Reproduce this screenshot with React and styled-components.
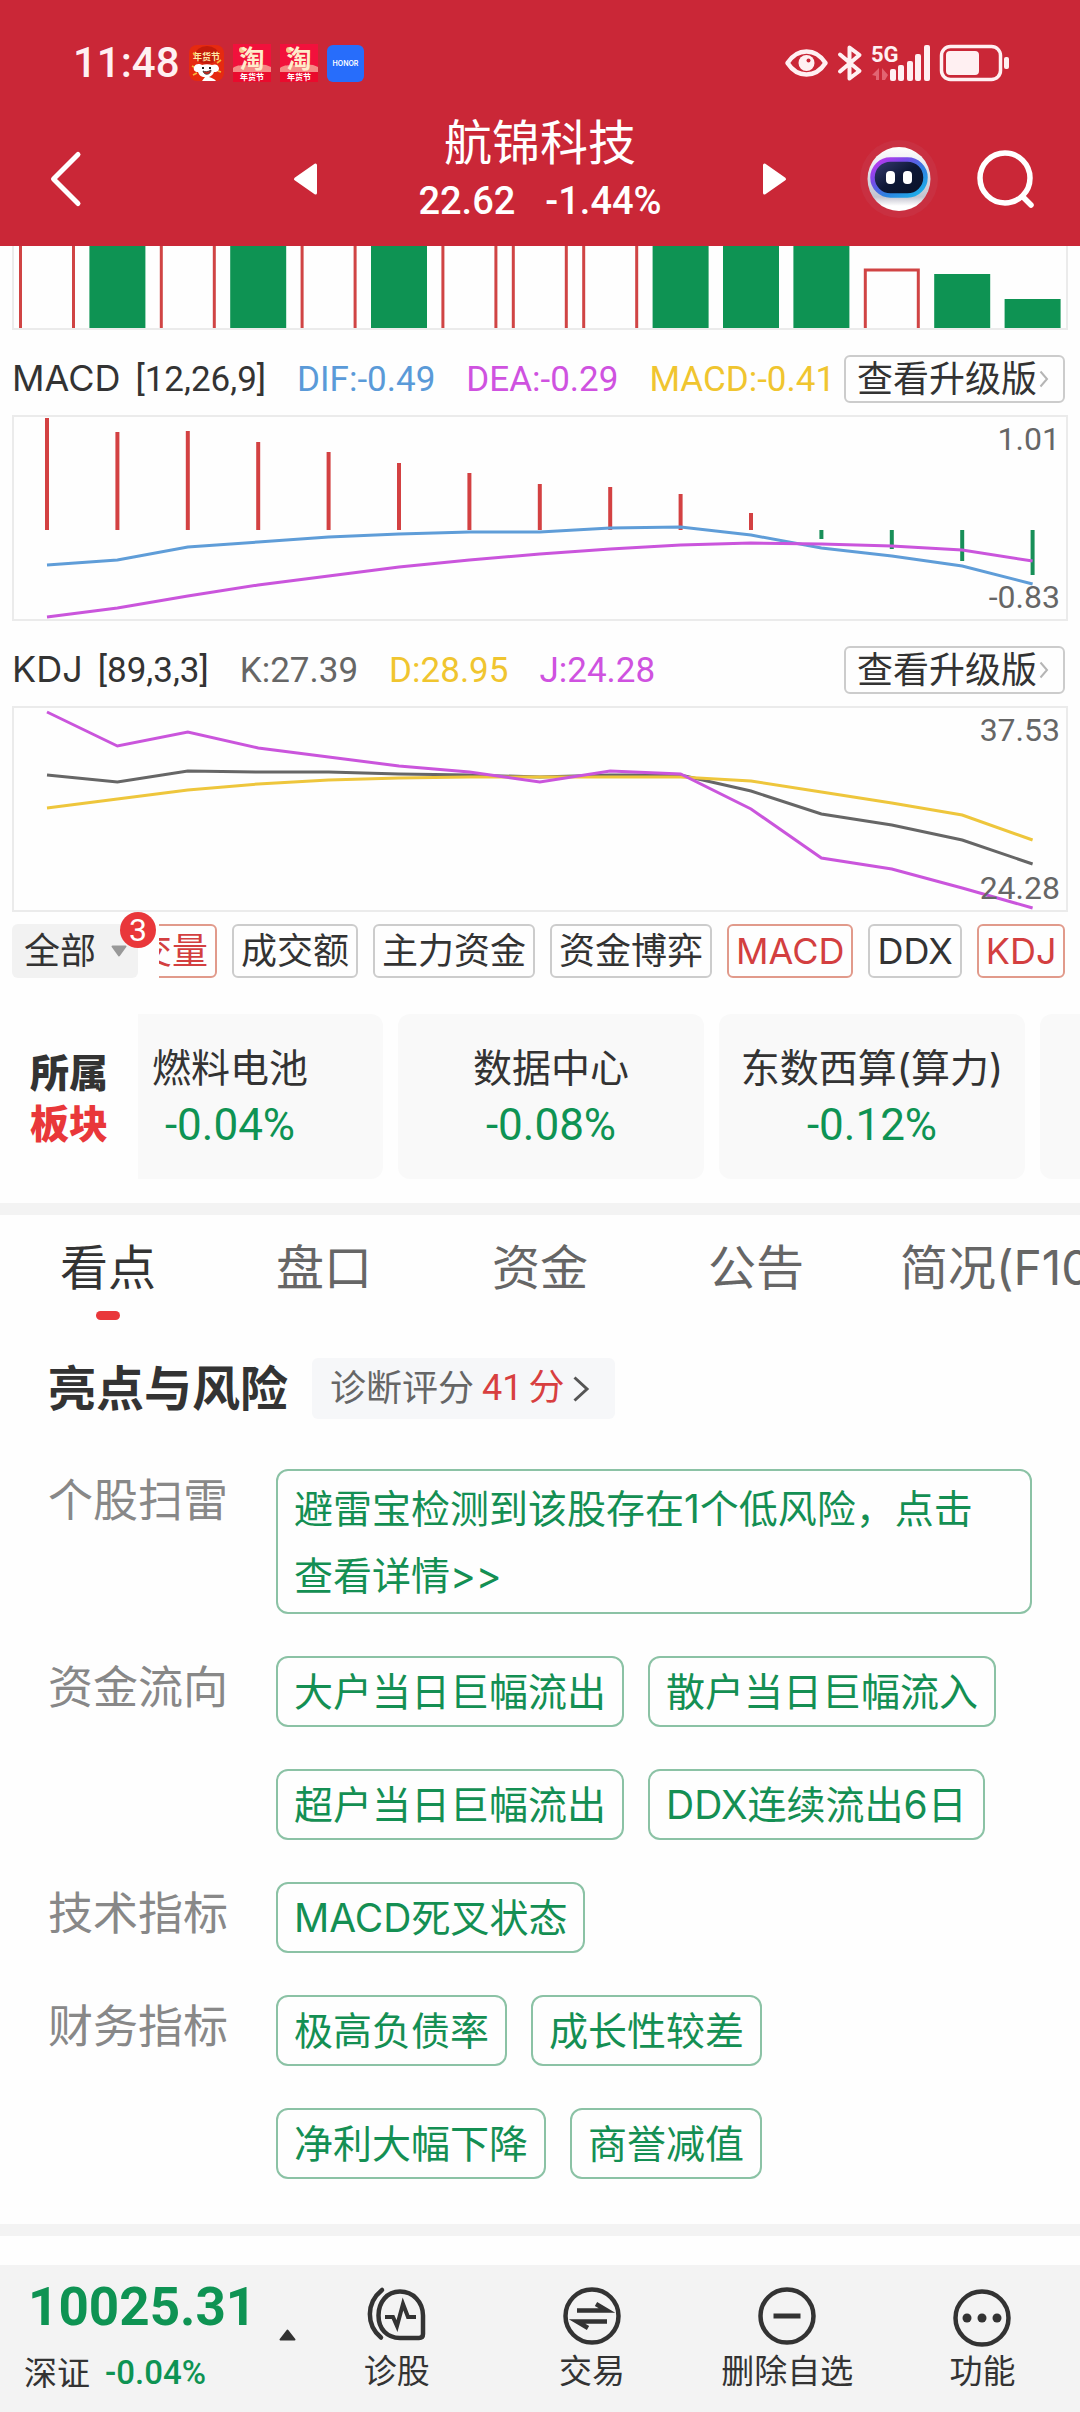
import React, { useLayoutEffect, useRef } from 'react';
import styled, { createGlobalStyle } from 'styled-components';

const RED = '#ca2737';
const ACCENT = '#e9373a';
const GREEN = '#0e9353';
const INK = '#333';
const TEXT = 'Inter, "Noto Sans CJK SC", sans-serif';
const DIGITS = 'Roboto, "Noto Sans CJK SC", sans-serif';

const Global = createGlobalStyle`
  *, *::before, *::after { box-sizing: border-box; }
  body { margin: 0; background: #fefefe; color: ${INK}; font-family: ${TEXT}; }
  button { font: inherit; color: inherit; background: none; border: 0; padding: 0; margin: 0; cursor: pointer; }
  a { color: inherit; text-decoration: none; }
  h1, h2, p, dl, dt, dd { margin: 0; padding: 0; }
  svg { display: block; flex: none; overflow: visible; }
`;

const Page = styled.div`
  min-height: 100vh;
  display: flex;
  flex-direction: column;
  overflow: hidden;
`;

/* ---------- header ---------- */

const Header = styled.header`
  background: ${RED};
  color: #fff;
  padding-top: 36px;
`;

const StatusBar = styled.div`
  height: 54px;
  margin-bottom: 22px;
  padding: 0 70px 0 73px;
  display: flex;
  align-items: center;
  justify-content: space-between;
`;

const StatusGroup = styled.div`
  display: flex;
  align-items: center;
  gap: ${(p) => p.$gap}px;
`;

const Clock = styled.time`
  font: 500 42px/54px ${DIGITS};
  color: #fff0f2;
`;

const Nav = styled.nav`
  display: grid;
  grid-template-columns: 1fr 446px 1fr;
  align-items: center;
  height: 134px;
`;

const NavSide = styled.div`
  display: flex;
  align-items: center;
  justify-content: space-between;
  padding: ${(p) => (p.$end ? '0 46px 0 0' : '0 0 0 50px')};
`;

const NavGroup = styled.div`
  display: flex;
  align-items: center;
  gap: 38px;
`;

const StockTitle = styled.div`
  align-self: start;
  text-align: center;
`;

const StockName = styled.h1`
  font: 400 48px/62px ${TEXT};
`;

const Quote = styled.p`
  display: flex;
  justify-content: center;
  gap: 30px;
  font: 500 38px/54px ${DIGITS};
`;

/* ---------- charts ---------- */

const Charts = styled.section`
  padding: 0 12px;
`;

const ChartBox = styled.div`
  position: relative;
  border: 2px solid #ebebeb;
  border-top-width: ${(p) => (p.$open ? 0 : 2)}px;
  svg { width: 100%; height: auto; }
`;

const AxisLabel = styled.span`
  position: absolute;
  right: 6px;
  ${(p) => p.$at}: 2px;
  font: 400 32px/40px ${DIGITS};
  color: #666;
`;

const IndicatorBar = styled.div`
  display: flex;
  align-items: center;
  justify-content: space-between;
  height: 48px;
  margin: 25px 3px 12px 0;
`;

const Readings = styled.div`
  display: flex;
  align-items: baseline;
  white-space: nowrap;
`;

const IndicatorName = styled.h2`
  font: 400 36px/48px ${TEXT};
  margin-right: 15px;
`;

const Reading = styled.span`
  font: 400 35px/48px ${DIGITS};
  color: ${(p) => p.$color};
  margin-right: 31px;
  &:last-child { margin-right: 0; }
`;

const UpgradeButton = styled.button`
  display: flex;
  align-items: center;
  gap: 2px;
  flex: none;
  height: 48px;
  padding: 0 14px 0 11px;
  border: 2px solid #ccc;
  border-radius: 6px;
  font: 400 36px/44px ${TEXT};
`;

const ChipBar = styled.div`
  display: flex;
  align-items: center;
  gap: 21px;
  padding: 12px 15px 0 12px;
`;

const AllButton = styled.button`
  position: relative;
  flex: none;
  display: flex;
  align-items: center;
  gap: 15px;
  width: 126px;
  height: 54px;
  padding-left: 12px;
  border-radius: 6px;
  background: #f2f2f2;
  font: 400 36px/54px ${TEXT};
`;

const Badge = styled.span`
  position: absolute;
  right: -18px;
  top: -12px;
  width: 36px;
  height: 36px;
  border-radius: 50%;
  background: ${ACCENT};
  color: #fff;
  font: 400 32px/36px ${DIGITS};
  text-align: center;
`;

const Scroller = styled.div`
  flex: 1;
  min-width: 0;
  display: flex;
  gap: 15px;
  overflow-x: auto;
  scrollbar-width: none;
`;

const Chip = styled.button`
  flex: none;
  height: 54px;
  padding: 0 7px;
  border: 2px solid ${(p) => (p.$on ? '#e19a8b' : '#ccc')};
  border-radius: 6px;
  color: ${(p) => (p.$on ? '#d33f40' : INK)};
  font: 400 36px/50px ${TEXT};
`;

/* ---------- sectors ---------- */

const Sectors = styled.section`
  display: flex;
  align-items: center;
  padding: 36px 0 24px;
  border-bottom: 12px solid #f3f3f3;
`;

const SectorTitle = styled.h2`
  width: 138px;
  padding: 2px 0 0 30px;
  font: 900 39px/51px ${TEXT};
  span { display: block; }
  span + span { color: ${ACCENT}; }
`;

const SectorCard = styled.a`
  flex: none;
  width: 306px;
  height: 165px;
  padding-top: 27px;
  border-radius: 12px;
  background: #f9f9f9;
  text-align: center;
  white-space: nowrap;
  font: 400 39px/54px ${TEXT};
`;

const SectorChange = styled.span`
  display: block;
  font: 400 44px/60px ${DIGITS};
  color: ${GREEN};
`;

/* ---------- tabs ---------- */

const Tabs = styled.div`
  display: flex;
  overflow-x: auto;
  scrollbar-width: none;
`;

const Tab = styled.button`
  flex: none;
  min-width: 216px;
  height: 105px;
  padding: 18px 36px 0;
  display: flex;
  flex-direction: column;
  align-items: center;
  gap: 9px;
  font: 400 48px/69px ${TEXT};
  color: ${(p) => (p.$active ? INK : '#666')};
  &::after {
    content: '';
    width: 24px;
    height: 9px;
    border-radius: 5px;
    background: ${(p) => (p.$active ? ACCENT : 'transparent')};
  }
`;

/* ---------- highlights ---------- */

const Highlights = styled.section`
  padding: 38px 48px 45px;
  border-bottom: 12px solid #f3f3f3;
`;

const HighlightsHead = styled.div`
  display: flex;
  align-items: center;
  gap: 24px;
  margin-bottom: 50px;
`;

const HighlightsTitle = styled.h2`
  font: 700 48px/61px ${TEXT};
`;

const ScoreLink = styled.a`
  display: flex;
  align-items: center;
  height: 61px;
  padding: 0 26px 0 18px;
  gap: 8px;
  border-radius: 6px;
  background: #f6f7f9;
  color: #666;
  font: 400 36px/61px ${TEXT};
`;

const Score = styled.strong`
  display: flex;
  gap: 6px;
  font: 400 36px/61px ${DIGITS};
  color: #d83f40;
`;

const FactList = styled.dl`
  display: flex;
  flex-direction: column;
  gap: 42px;
`;

const FactRow = styled.div`
  display: flex;
`;

const FactLabel = styled.dt`
  flex: none;
  width: 228px;
  font: 400 45px/64px ${TEXT};
  color: #888;
`;

const FactTags = styled.dd`
  flex: 1;
  display: flex;
  flex-wrap: wrap;
  gap: 42px 24px;
`;

const Tag = styled.a`
  padding: ${(p) => (p.$wrap ? '4px 32px 3px 16px' : '0 16px')};
  border: 2px solid #8bc2a5;
  border-radius: 12px;
  color: #148f53;
  font: 400 39px/67px ${TEXT};
  white-space: ${(p) => (p.$wrap ? 'normal' : 'nowrap')};
`;

/* ---------- footer ---------- */

const Footer = styled.footer`
  margin-top: auto;
  height: 147px;
  display: flex;
  background: #f3f3f3;
`;

const IndexButton = styled.button`
  width: 299px;
  padding: 10px 3px 17px 24px;
  display: flex;
  align-items: center;
  justify-content: space-between;
  text-align: left;
`;

const IndexValue = styled.span`
  display: block;
  padding-left: 4px;
  margin-bottom: 12px;
  font: 700 53px/64px ${DIGITS};
  color: ${GREEN};
`;

const IndexLine = styled.span`
  display: flex;
  align-items: center;
  gap: 15px;
  font: 400 33px/44px ${TEXT};
`;

const IndexChange = styled.span`
  font: 500 33px/44px ${DIGITS};
  color: ${GREEN};
`;

const Actions = styled.div`
  flex: 1;
  display: grid;
  grid-template-columns: repeat(4, 1fr);
`;

const Action = styled.button`
  display: flex;
  flex-direction: column;
  align-items: center;
  padding-top: 21px;
  font: 400 33px/50px ${TEXT};
`;

/* ---------- drawings ---------- */

const MallIcon = () => (
  <svg width="35" height="36" viewBox="0 0 35 36" aria-hidden="true">
    <rect width="35" height="36" rx="8" fill="#e62a10" />
    <ellipse cx="18" cy="10" rx="12" ry="9" fill="#c31b0b" />
    <text x="17.5" y="15" fontSize="9" fontWeight="700" fill="#ffe9a8" textAnchor="middle" fontFamily="Noto Sans CJK SC, sans-serif">年货节</text>
    <path d="M3 21l4 2M32 15l-4 3M4 30l4-2M32 27l-3-1M4 8l3 2" stroke="#f5b93c" strokeWidth="1.6" />
    <path d="M5 22c2-4 6-3 8-2 3-1 7-1 10 0 3-1 6-1 7 3 0 4-3 4-5 4-1 3-3 4-5 5 3 1 6 2 7 4H13l3-4c-4 0-6-2-7-5-3 0-5-2-4-5z" fill="#fff" />
    <path d="M14 22v2M21 22v2" stroke="#222" strokeWidth="2" />
    <path d="M14 26c2 1 5 1 8-1 0 5-7 6-8 1z" fill="#c9281d" stroke="#333" strokeWidth=".8" />
  </svg>
);

const ShopIcon = () => (
  <svg width="38" height="38" viewBox="0 0 38 38" aria-hidden="true">
    <rect width="38" height="38" fill="#f2113c" />
    <path d="M0 24c5-4 10-2 19-3s14-1 19 2v5H0z" fill="#f58a86" />
    <rect y="28" width="38" height="10" fill="#ea0a2d" />
    <circle cx="9" cy="6" r="3" fill="#f7c88c" />
    <text x="19" y="24" fontSize="25" fontWeight="700" fill="#ffeccb" textAnchor="middle" fontFamily="Noto Sans CJK SC, sans-serif">淘</text>
    <text x="19" y="36" fontSize="8" fontWeight="700" fill="#fff" textAnchor="middle" fontFamily="Noto Sans CJK SC, sans-serif">年货节</text>
  </svg>
);

const HonorIcon = () => (
  <svg width="37" height="37" viewBox="0 0 37 37" aria-hidden="true">
    <rect width="37" height="37" rx="6" fill="#276dfb" />
    <text x="18.5" y="21" fontSize="7" fontWeight="600" fill="#fff" textAnchor="middle" fontFamily="Inter, sans-serif">HONOR</text>
  </svg>
);

const EyeIcon = () => (
  <svg width="43" height="28" viewBox="0 0 43 28" fill="none" aria-hidden="true">
    <path d="M2.5 14C8 5.500 14 2.500 21.500 2.500S35 5.500 40.500 14C35 22.500 29 25.500 21.500 25.500S8 22.500 2.500 14z" stroke="#fff0f2" strokeWidth="4.5" strokeLinejoin="round" />
    <circle cx="21.5" cy="14" r="8" fill="#fff0f2" />
    <circle cx="23.5" cy="11.5" r="2" fill={RED} />
  </svg>
);

const BluetoothIcon = () => (
  <svg width="24" height="36" viewBox="0 0 24 36" fill="none" aria-hidden="true">
    <path d="M2 9.500L21.500 26 11.500 33.500V2.500L21.500 10 2 26.500" stroke="#fff0f2" strokeWidth="4" strokeLinejoin="round" strokeLinecap="round" />
  </svg>
);

const SignalIcon = () => (
  <svg width="58" height="36" viewBox="0 0 58 36" aria-hidden="true">
    <text x="-1" y="17" fontSize="22" fontWeight="700" fill="#fff0f2" fontFamily="Roboto, sans-serif">5G</text>
    <path d="M0 30l7-7v12H4v-4zM16 30l-6-7v12h3z" fill="#e26472" />
    {[[18, 24], [26, 20], [35, 16], [43, 9], [52, 0]].map(([x, y]) => (
      <rect key={x} x={x} y={y} width="6" height={36 - y} rx="2" fill="#fff0f2" />
    ))}
  </svg>
);

const BatteryIcon = () => (
  <svg width="70" height="36" viewBox="0 0 70 36" aria-hidden="true">
    <rect x="1.5" y="1.5" width="59" height="33" rx="9" fill="none" stroke="#fff0f2" strokeWidth="3.5" />
    <rect x="6" y="6" width="33" height="24" rx="4" fill="#fff0f2" />
    <rect x="64" y="12" width="5" height="12" rx="2" fill="#fff0f2" />
  </svg>
);

const BackIcon = () => (
  <svg width="31" height="54" viewBox="0 0 31 54" fill="none" aria-hidden="true">
    <path d="M28 2.500L3.500 27 28 51.500" stroke="#fff" strokeWidth="5" strokeLinecap="round" strokeLinejoin="round" />
  </svg>
);

const StepIcon = ({ next }) => (
  <svg width="23" height="32" viewBox="0 0 23 32" aria-hidden="true">
    <path d={next ? 'M1.500 2v28L21.500 16z' : 'M21.500 2v28L1.500 16z'} fill="#fff" stroke="#fff" strokeWidth="3" strokeLinejoin="round" />
  </svg>
);

const RobotIcon = () => (
  <svg width="80" height="80" viewBox="0 0 80 80" aria-hidden="true">
    <defs>
      <linearGradient id="visorRim" x1="0" y1="0" x2="1" y2="1">
        <stop offset="0" stopColor="#c935f0" />
        <stop offset=".3" stopColor="#7a4ae8" />
        <stop offset=".6" stopColor="#2f7fe0" />
        <stop offset="1" stopColor="#19b8ea" />
      </linearGradient>
      <linearGradient id="visorGlass" x1="0" y1="0" x2="1" y2="1">
        <stop offset="0" stopColor="#3a3f78" />
        <stop offset=".5" stopColor="#0d1736" />
        <stop offset="1" stopColor="#0a1226" />
      </linearGradient>
      <linearGradient id="shell" x1="0" y1="0" x2="0" y2="1">
        <stop offset="0" stopColor="#fff" />
        <stop offset=".78" stopColor="#c3c3cf" />
        <stop offset=".92" stopColor="#fff" />
      </linearGradient>
    </defs>
    <circle cx="40" cy="40" r="39" fill="#c93041" />
    <ellipse cx="40" cy="40" rx="31.5" ry="32" fill="url(#shell)" />
    <rect x="13.5" y="20.5" width="53" height="36" rx="18" fill="url(#visorGlass)" stroke="url(#visorRim)" strokeWidth="4.5" />
    <rect x="27" y="32" width="9" height="13" rx="4" fill="#fff" />
    <rect x="44" y="32" width="9" height="13" rx="4" fill="#fff" />
  </svg>
);

const SearchIcon = () => (
  <svg width="57" height="60" viewBox="0 0 57 60" fill="none" aria-hidden="true">
    <circle cx="28" cy="29" r="25" stroke="#fff" strokeWidth="5.5" />
    <path d="M46 48l8 8" stroke="#fff" strokeWidth="5.5" strokeLinecap="round" />
  </svg>
);

const Chevron = ({ width, height, color, stroke }) => (
  <svg width={width} height={height} viewBox={`0 0 ${width} ${height}`} fill="none" aria-hidden="true">
    <path d={`M1.500 1.500L${width - 2} ${height / 2}L1.500 ${height - 1.5}`} stroke={color} strokeWidth={stroke} />
  </svg>
);

const Caret = ({ up }) => (
  <svg width="17" height="12" viewBox="0 0 17 12" aria-hidden="true">
    <path d={up ? 'M1.500 10.500h14L8.500 1.500z' : 'M1.500 1.500h13L8 10.500z'} fill={up ? INK : '#999'} stroke={up ? INK : '#999'} strokeWidth="2" strokeLinejoin="round" />
  </svg>
);

const ActionIcon = ({ kind }) => (
  <svg width="60" height="60" viewBox="0 0 60 60" fill="none" stroke={INK} strokeWidth="4.5" aria-hidden="true">
    {kind === 'diagnose' ? (
      <>
        <path d="M33 5.500C20 5.500 11.500 16 11.500 29.500S20 52 33 52h19q4 0 4-4V29.500C56 16 46 5.500 33 5.500z" />
        <path d="M15 4C-1 17-1 39 14 51.500" strokeLinecap="round" />
        <path d="M18 31h8l4 9 6-22 5 13h8" strokeWidth="4" />
      </>
    ) : (
      <circle cx="30" cy={kind === 'more' ? 32 : 30} r="26.5" />
    )}
    {kind === 'trade' && <path d="M15 24.500h30L34 18M45 35.500H15l11 6.500" />}
    {kind === 'remove' && <path d="M16.500 30h27" strokeWidth="5" />}
    {kind === 'more' && [15, 30, 45].map((x) => <circle key={x} cx={x} cy="32" r="4.5" fill={INK} stroke="none" />)}
  </svg>
);

/* ---------- chart data ---------- */

const FIRST = 33;
const STEP = 70.4;
const px = (i) => FIRST + STEP * i;
const line = (ys) => ys.map((y, i) => `${px(i)},${y}`).join(' ');

const VOLUMES = [
  [0, 1], [0, 0], [0, 1], [0, 0], [0, 1], [0, 0], [0, 1], [0, 1], [0, 1],
  [0, 0], [0, 0], [0, 0], [24, 1], [28, 0], [53, 0],
];

const MACD_ZERO = 113;
const MACD_BARS = [1, 15, 14, 25, 35, 46, 56, 67, 70, 77, 96, 122, 132, 144, 158];
const DIF = [148, 143, 130, 125, 120, 117, 115, 115, 111, 110, 118, 131, 139, 149, 167];
const DEA = [200, 191, 179, 168, 159, 150, 143, 137, 132, 128, 126, 127, 129, 133, 144];

const KLINE = [67, 74, 63, 64, 64, 66, 67, 69, 67, 67, 83, 106, 117, 132, 156];
const DLINE = [100, 91, 82, 76, 72, 70, 69, 69, 69, 69, 73, 84, 95, 107, 132];
const JLINE = [4, 38, 24, 40, 49, 58, 64, 74, 63, 66, 101, 150, 161, 180, 200];

const VolumeChart = () => (
  <ChartBox $open>
    <svg viewBox="0 0 1052 82" role="img" aria-label="成交量">
      {VOLUMES.map(([top, up], i) =>
        up ? (
          <path key={i} d={`M${px(i) - 26.5} 82V${top}${top ? '' : 'M'}${top ? 'H' : ''}${px(i) + 26.5}${top ? '' : ' 0'}V82`} fill="none" stroke="#d04444" strokeWidth="3" />
        ) : (
          <rect key={i} x={px(i) - 28} y={top} width="56" height={82 - top} fill={GREEN} />
        )
      )}
    </svg>
  </ChartBox>
);

const MacdChart = () => (
  <ChartBox>
    <svg viewBox="0 0 1052 202" role="img" aria-label="MACD" fill="none" strokeWidth="3">
      {MACD_BARS.map((y, i) => (
        <path key={i} d={`M${px(i)} ${MACD_ZERO}V${y}`} stroke={y < MACD_ZERO ? '#d34142' : '#188f58'} strokeWidth="4" />
      ))}
      <polyline points={line(DIF)} stroke="#5f9dd8" />
      <polyline points={line(DEA)} stroke="#ca55dc" />
    </svg>
    <AxisLabel $at="top">1.01</AxisLabel>
    <AxisLabel $at="bottom">-0.83</AxisLabel>
  </ChartBox>
);

const KdjChart = () => (
  <ChartBox>
    <svg viewBox="0 0 1052 202" role="img" aria-label="KDJ" fill="none" strokeWidth="3">
      <polyline points={line(KLINE)} stroke="#666" />
      <polyline points={line(DLINE)} stroke="#eec63c" />
      <polyline points={line(JLINE)} stroke="#ca55dc" />
    </svg>
    <AxisLabel $at="top">37.53</AxisLabel>
    <AxisLabel $at="bottom">24.28</AxisLabel>
  </ChartBox>
);

const Indicator = ({ name, params, readings }) => (
  <IndicatorBar>
    <Readings>
      <IndicatorName>{name}</IndicatorName>
      <Reading $color={INK}>{params}</Reading>
      {readings.map(([text, color]) => (
        <Reading key={text} $color={color}>{text}</Reading>
      ))}
    </Readings>
    <UpgradeButton type="button">
      查看升级版
      <Chevron width={10} height={18} color="#b5b5b5" stroke={2} />
    </UpgradeButton>
  </IndicatorBar>
);

const CHIPS = [
  ['成交量', true], ['成交额', false], ['主力资金', false], ['资金博弈', false],
  ['MACD', true], ['DDX', false], ['KDJ', true],
];

const SECTORS = [['燃料电池', '-0.04%'], ['数据中心', '-0.08%'], ['东数西算(算力)', '-0.12%'], ['', '']];

const FACTS = [
  ['个股扫雷', ['避雷宝检测到该股存在1个低风险，点击查看详情>>']],
  ['资金流向', ['大户当日巨幅流出', '散户当日巨幅流入', '超户当日巨幅流出', 'DDX连续流出6日']],
  ['技术指标', ['MACD死叉状态']],
  ['财务指标', ['极高负债率', '成长性较差', '净利大幅下降', '商誉减值']],
];

const ACTIONS = [['diagnose', '诊股'], ['trade', '交易'], ['remove', '删除自选'], ['more', '功能']];

export default function App() {
  const chips = useRef(null);
  const sectors = useRef(null);

  useLayoutEffect(() => {
    chips.current.scrollLeft = chips.current.scrollWidth;
    sectors.current.scrollLeft = 61;
  }, []);

  return (
    <Page>
      <Global />
      <Header>
        <StatusBar>
          <StatusGroup $gap={9}>
            <Clock>11:48</Clock>
            <MallIcon />
            <ShopIcon />
            <ShopIcon />
            <HonorIcon />
          </StatusGroup>
          <StatusGroup $gap={10}>
            <EyeIcon />
            <BluetoothIcon />
            <SignalIcon />
            <BatteryIcon />
          </StatusGroup>
        </StatusBar>
        <Nav>
          <NavSide>
            <button type="button" aria-label="返回"><BackIcon /></button>
            <button type="button" aria-label="上一只"><StepIcon /></button>
          </NavSide>
          <StockTitle>
            <StockName>航锦科技</StockName>
            <Quote><span>22.62</span><span>-1.44%</span></Quote>
          </StockTitle>
          <NavSide $end>
            <button type="button" aria-label="下一只"><StepIcon next /></button>
            <NavGroup>
              <button type="button" aria-label="智能助手"><RobotIcon /></button>
              <button type="button" aria-label="搜索"><SearchIcon /></button>
            </NavGroup>
          </NavSide>
        </Nav>
      </Header>

      <Charts>
        <VolumeChart />
        <Indicator
          name="MACD"
          params="[12,26,9]"
          readings={[['DIF:-0.49', '#5a9ad8'], ['DEA:-0.29', '#cf52e0'], ['MACD:-0.41', '#f0c52f']]}
        />
        <MacdChart />
        <Indicator
          name="KDJ"
          params="[89,3,3]"
          readings={[['K:27.39', '#666'], ['D:28.95', '#f0c52f'], ['J:24.28', '#cf52e0']]}
        />
        <KdjChart />
      </Charts>

      <ChipBar>
        <AllButton type="button">
          全部
          <Caret />
          <Badge>3</Badge>
        </AllButton>
        <Scroller ref={chips}>
          {CHIPS.map(([label, on]) => (
            <Chip key={label} type="button" $on={on}>{label}</Chip>
          ))}
        </Scroller>
      </ChipBar>

      <Sectors>
        <SectorTitle><span>所属</span><span>板块</span></SectorTitle>
        <Scroller ref={sectors}>
          {SECTORS.map(([name, change], i) => (
            <SectorCard key={i} href="#sector">
              {name}
              <SectorChange>{change}</SectorChange>
            </SectorCard>
          ))}
        </Scroller>
      </Sectors>

      <Tabs role="tablist">
        {['看点', '盘口', '资金', '公告', '简况(F10)'].map((label, i) => (
          <Tab key={label} type="button" role="tab" aria-selected={i === 0} $active={i === 0}>{label}</Tab>
        ))}
      </Tabs>

      <Highlights>
        <HighlightsHead>
          <HighlightsTitle>亮点与风险</HighlightsTitle>
          <ScoreLink href="#score">
            诊断评分
            <Score><span>41</span><span>分</span></Score>
            <Chevron width={16} height={26} color="#555" stroke={3} />
          </ScoreLink>
        </HighlightsHead>
        <FactList>
          {FACTS.map(([label, tags]) => (
            <FactRow key={label}>
              <FactLabel>{label}</FactLabel>
              <FactTags>
                {tags.map((tag) => (
                  <Tag key={tag} href="#detail" $wrap={tag.length > 12}>{tag}</Tag>
                ))}
              </FactTags>
            </FactRow>
          ))}
        </FactList>
      </Highlights>

      <Footer>
        <IndexButton type="button">
          <span>
            <IndexValue>10025.31</IndexValue>
            <IndexLine>深证<IndexChange>-0.04%</IndexChange></IndexLine>
          </span>
          <Caret up />
        </IndexButton>
        <Actions>
          {ACTIONS.map(([kind, label]) => (
            <Action key={kind} type="button">
              <ActionIcon kind={kind} />
              {label}
            </Action>
          ))}
        </Actions>
      </Footer>
    </Page>
  );
}
